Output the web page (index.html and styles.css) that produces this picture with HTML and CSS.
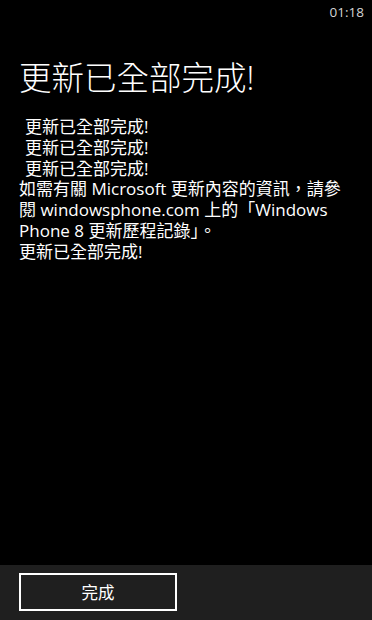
FILE: index.html
```html
<!DOCTYPE html>
<html lang="zh-Hant">
<head>
  <meta charset="UTF-8">
  <meta name="viewport" content="width=device-width, initial-scale=1.0">
  <title>更新已全部完成!</title>
  <link rel="stylesheet" href="styles.css">
</head>
<body>
  <div class='phone'>
    <div class='status'>01:18</div>
    <div class='content'>
      <h1>更新已全部完成!</h1>
      <div class='log'>
        <p class='indent'>更新已全部完成!</p>
        <p class='indent'>更新已全部完成!</p>
        <p class='indent'>更新已全部完成!</p>
        <p>如需有關 Microsoft 更新內容的資訊，請參閱 windowsphone.com 上的「Windows Phone 8 更新歷程記錄」。</p>
        <p>更新已全部完成!</p>
      </div>
    </div>
    <div class='appbar'>
      <button class='done'>完成</button>
    </div>
  </div>
</body>
</html>
```

FILE: styles.css
```css
* {
  margin: 0;
  padding: 0;
  box-sizing: border-box;
}
body {
  background-color: #000;
  color: #fff;
  font-family: "Open Sans", "Noto Sans CJK TC", sans-serif;
}
.phone {
  height: 620px;
  display: flex;
  flex-direction: column;
}
.status {
  height: 22px;
  padding: 5px 8px 0 0;
  text-align: right;
  font-size: 13.5px;
  line-height: 15px;
  color: #d4d4d4;
}
.content {
  flex: 1;
  padding: 0 19px;
}
h1 {
  margin-top: 36px;
  font-size: 32.5px;
  font-weight: 300;
  line-height: 40px;
}
.log {
  margin-top: 19px;
  font-size: 17px;
  line-height: 20.8px;
}
.indent {
  padding-left: 6px;
}
.appbar {
  height: 55px;
  background-color: #1f1f1f;
  padding: 8px 19px 0;
}
.done {
  width: 158px;
  height: 38px;
  border: 2px solid #fff;
  background-color: transparent;
  color: #fff;
  font-family: "Open Sans", "Noto Sans CJK TC", sans-serif;
  font-size: 16.5px;
}
```
